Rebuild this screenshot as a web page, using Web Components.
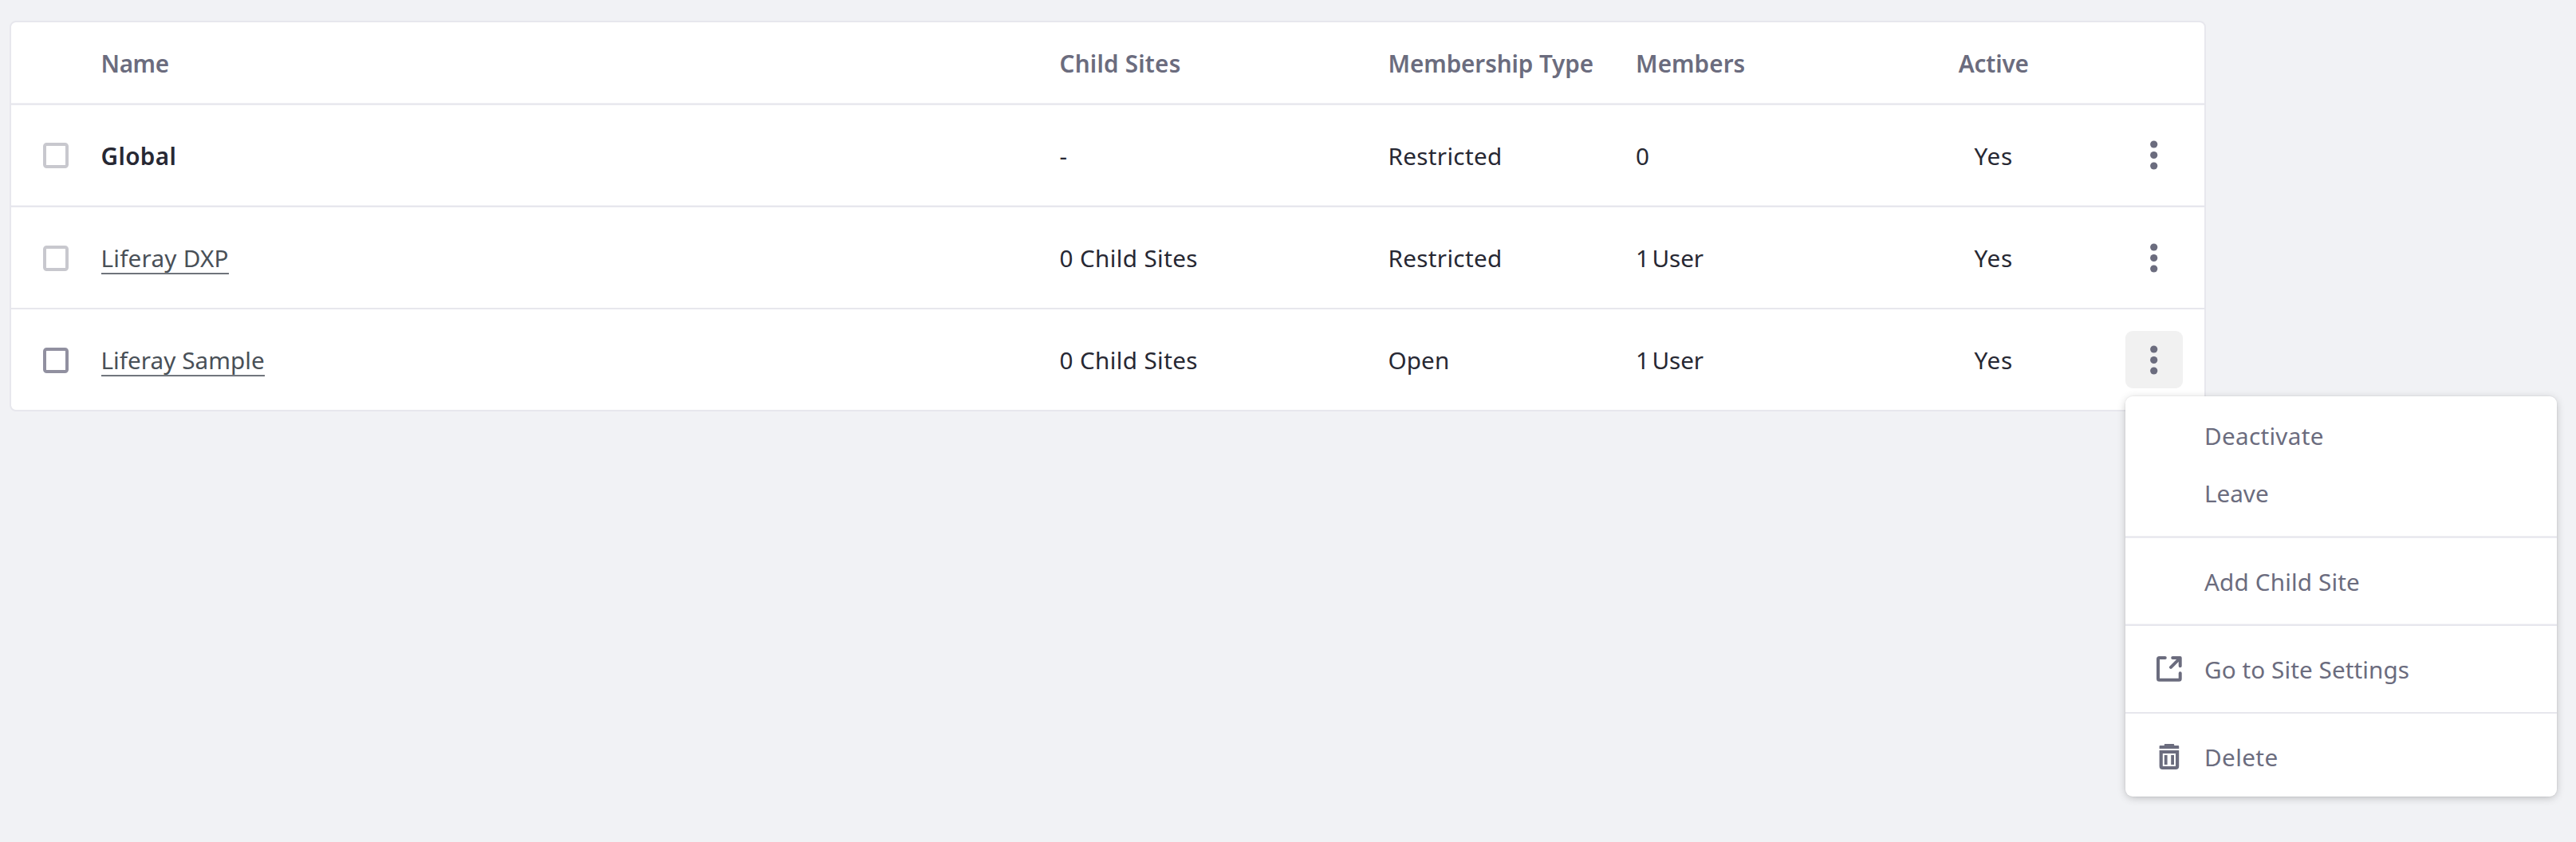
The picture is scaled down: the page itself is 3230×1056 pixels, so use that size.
<!DOCTYPE html>
<html lang="en">
<head>
<meta charset="utf-8">
<title>Sites</title>
<style>
html,body{margin:0;height:100%;background:#f1f2f5}
body{font:400 29.7px/36px "Noto Sans",sans-serif;color:#272833;overflow:hidden}
</style>
</head>
<body>
<sites-page></sites-page>
<script>
const define = (name, html, setup) => {
  const tpl = document.createElement('template');
  tpl.innerHTML = html;
  customElements.define(name, class extends HTMLElement {
    connectedCallback() {
      if (this.shadowRoot) return;
      const root = this.attachShadow({mode: 'open'});
      root.append(tpl.content.cloneNode(true));
      if (setup) setup(this, root);
    }
  });
};

/* A one-line label whose tracking is tuned to a set advance width. */
define('text-label', `<style>
:host{display:block;white-space:pre}
:host([tight]){word-spacing:-4px}
span{display:inline-block}
</style><span><slot></slot></span>`, (host, root) => {
  const width = parseFloat(host.getAttribute('w'));
  if (!width) return;
  const span = root.querySelector('span');
  const natural = span.getBoundingClientRect().width;
  span.style.letterSpacing = ((width - natural) / host.textContent.length).toFixed(3) + 'px';
});

define('check-box', `<style>
:host{display:block;box-sizing:border-box;width:32px;height:32px;margin-top:1px;border:4.4px solid #c8c8ce;border-radius:4.5px;background:#fff}
:host([enabled]){border-color:#9190a0}
</style>`);

define('kebab-button', `<style>
:host{display:flex;align-items:center;justify-content:center;width:72px;height:72px;border-radius:9px;color:#6b6c7e}
:host([open]){background:#f1f1f1}
svg{display:block}
</style><svg width="10" height="37" viewBox="0 0 10 37" fill="currentColor"><circle cx="4.7" cy="5" r="4.6"/><circle cx="4.7" cy="18.5" r="4.6"/><circle cx="4.7" cy="32" r="4.6"/></svg>`);

define('row-line', `<style>
:host{display:block;height:2px;background:#e7e7ed}
:host([soft]){height:3px;background:linear-gradient(#efeff3 0 1px,#e7e7ed 1px 2px,#ececf1 2px)}
:host([late]){height:3px;background:linear-gradient(#f5f5f8 0 1px,#e7e7ed 1px)}
</style>`);

define('table-row', `<style>
:host{display:grid;grid-template-columns:112.5px 1202px 412px 310.5px 310.5px 276.5px 1fr;align-items:center;height:125px}
:host([tall]){height:126px}
:host([head]){height:101px;color:#6b6c7e;font-weight:650}
.pick{padding-left:40px}
.t{padding-top:3px}
:host([tall]) .t{padding-top:1px}
.c{display:flex;justify-content:center}
</style>
<div class="pick"><slot name="pick"></slot></div>
<div class="t"><slot name="name"></slot></div>
<div class="t"><slot name="child"></slot></div>
<div class="t"><slot name="type"></slot></div>
<div class="t"><slot name="members"></slot></div>
<div class="t c"><slot name="active"></slot></div>
<div class="c"><slot name="action"></slot></div>`);

define('site-link', `<style>
:host{display:flex;width:max-content;color:#495057;height:38px;box-sizing:border-box;background:linear-gradient(#8f9399 0 1px,#50565e 1px) 0 100%/100% 2px no-repeat;margin-top:3px}
</style><slot></slot>`);

define('sites-table', `<style>
:host{display:block;box-sizing:border-box;width:2754px;height:490px;border:2px solid #e7e7ed;border-radius:8px;background:#fff}
.global{font-weight:650}
</style>
<table-row head>
 <text-label slot="name" w="85.2">Name</text-label>
 <text-label slot="child" w="152">Child Sites</text-label>
 <text-label slot="type" w="257.5">Membership Type</text-label>
 <text-label slot="members" w="137.3">Members</text-label>
 <text-label slot="active" w="88">Active</text-label>
</table-row>
<row-line soft></row-line>
<table-row>
 <check-box slot="pick"></check-box>
 <text-label class="global" slot="name" w="94.8">Global</text-label>
 <text-label slot="child">-</text-label>
 <text-label slot="type" w="143">Restricted</text-label>
 <text-label slot="members">0</text-label>
 <text-label slot="active" w="48.7">Yes</text-label>
 <kebab-button slot="action"></kebab-button>
</table-row>
<row-line late></row-line>
<table-row tall>
 <check-box slot="pick"></check-box>
 <site-link slot="name"><text-label w="160.3">Liferay DXP</text-label></site-link>
 <text-label slot="child" w="173.4">0 Child Sites</text-label>
 <text-label slot="type" w="143">Restricted</text-label>
 <text-label slot="members" w="85" tight>1 User</text-label>
 <text-label slot="active" w="48.7">Yes</text-label>
 <kebab-button slot="action"></kebab-button>
</table-row>
<row-line></row-line>
<table-row tall>
 <check-box slot="pick" enabled></check-box>
 <site-link slot="name"><text-label w="205.3">Liferay Sample</text-label></site-link>
 <text-label slot="child" w="173.4">0 Child Sites</text-label>
 <text-label slot="type" w="76.8">Open</text-label>
 <text-label slot="members" w="85" tight>1 User</text-label>
 <text-label slot="active" w="48.7">Yes</text-label>
 <kebab-button slot="action" open></kebab-button>
</table-row>`);

define('menu-item', `<style>
:host{display:flex;align-items:center;height:72px;color:#6b6c7e}
.icon{width:60.5px;padding-left:38.5px;display:flex;padding-top:2px}
.text{padding-top:3px}
</style><div class="icon"><slot name="icon"></slot></div><div class="text"><slot></slot></div>`);

define('action-menu', `<style>
:host{display:block;box-sizing:border-box;width:540.5px;height:502px;padding-top:12px;border-radius:9px;background:#fff;box-shadow:0 2.25px 11.25px -2.25px rgba(0,0,0,.3),0 0 0 1px rgba(0,0,0,.025)}
svg{display:block}
.a{margin:19px 0 17px}.b{margin:18px 0 17px}
</style>
<menu-item><text-label w="149.7">Deactivate</text-label></menu-item>
<menu-item><text-label w="80.6">Leave</text-label></menu-item>
<row-line soft class="a"></row-line>
<menu-item><text-label w="195">Add Child Site</text-label></menu-item>
<row-line late class="b"></row-line>
<menu-item><svg slot="icon" width="32" height="32" viewBox="0 0 32 32" fill="none" stroke="#6b6c7e" stroke-width="4" stroke-linecap="round" stroke-linejoin="round"><path d="M10.8 2H3.5Q2 2 2 3.5V28.3Q2 29.8 3.5 29.8H28.2Q29.7 29.8 29.7 28.3V21.2M20.2 2H29.7V12.2M29 2.8L18 13.8"/></svg><text-label w="257">Go to Site Settings</text-label></menu-item>
<row-line class="a"></row-line>
<menu-item><svg slot="icon" width="32" height="32" viewBox="0 0 32 32" fill="#6b6c7e"><path d="M9.8 2V.8Q9.8 0 10.6 0H21.4Q22.2 0 22.2 .8V2H27.2Q28.2 2 28.2 3V6H3.6V3Q3.6 2 4.6 2Z"/><path fill-rule="evenodd" d="M3.6 8H28.2V28Q28.2 32 24.2 32H7.6Q3.6 32 3.6 28ZM7.8 12V28H24V12Z"/><path d="M9.8 14H13.6V26H9.8ZM18.2 14H22V26H18.2Z"/></svg><text-label w="92.5">Delete</text-label></menu-item>`);

define('sites-page', `<style>
:host{display:block;position:relative;box-sizing:border-box;height:1056px;padding:26px 0 0 12px}
action-menu{position:absolute;left:2665px;top:497px}
</style><sites-table></sites-table><action-menu></action-menu>`);
</script>
</body>
</html>
